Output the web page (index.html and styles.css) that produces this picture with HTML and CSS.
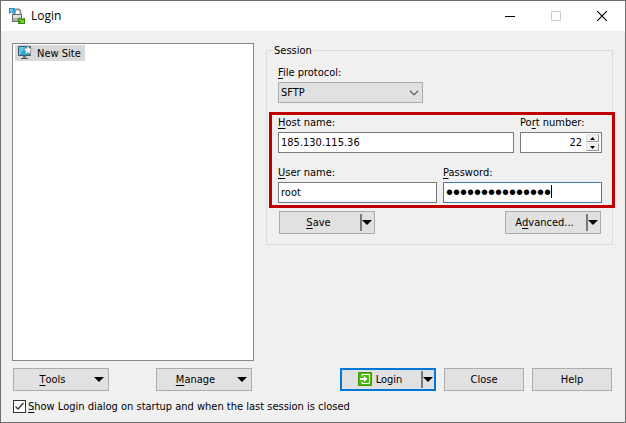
FILE: index.html
```html
<!DOCTYPE html>
<html lang="en">
<head>
<meta charset="utf-8">
<title>Login</title>
<link rel="stylesheet" href="styles.css">
</head>

<body>
<div class="window">

<header class="titlebar">
<svg class="app-icon" width="16" height="16" viewBox="0 0 16 16" aria-hidden="true">
<path d="M5.500 7V4a3 2.800 0 0 1 6 0v3" fill="none" stroke="#999" stroke-width="2"/>
<path d="M3.500 6.500h9v7h-9z" fill="#e2e2e2" stroke="#666"/>
<path d="M4 10h8v3H4z" fill="#b5b5b5"/>
<path d="M0 0h6v1L5 2l2 2-2.500 2.500L2.500 4 1 5.500H0z" fill="#1f8cc9"/>
<path d="M1 1h3v1L3.500 2.500 5.500 4.200l-1 1L2.500 3 1 4z" fill="#6fd0f5"/>
<path d="M16 16h-7v-1.200l1.200-1.200L8 11.500 10.500 9l2.300 2.200L14.500 10H16z" fill="#348a08"/>
<path d="M15 15h-4l1-1.200-2.300-2.300 1-1 2.300 2.300L15 11.500z" fill="#7ddc2c"/>
</svg>
<h1 class="title">Login</h1>
<button class="win-btn" type="button" aria-label="Minimize"><svg width="10" height="10" viewBox="0 0 10 10"><path d="M0 5.500h10" stroke="#000"/></svg></button>
<button class="win-btn" type="button" aria-label="Maximize" disabled><svg width="10" height="10" viewBox="0 0 10 10"><path d="M.5.5h9v9h-9z" fill="none" stroke="#ccc"/></svg></button>
<button class="win-btn" type="button" aria-label="Close window"><svg width="10" height="10" viewBox="0 0 10 10"><path d="M0 0l10 10M10 0L0 10" stroke="#000" stroke-width="1.2"/></svg></button>
</header>

<form class="content">
<div class="panes">

<ul class="sites">
<li><a class="site" href="#">
<svg width="16" height="16" viewBox="0 0 16 16" aria-hidden="true">
<path d="M1.500 1.500h12v9h-12z" fill="#22a9cf" stroke="#4b5a66"/>
<path d="M2 2h6L3 10H2z" fill="#58c9e6"/>
<path d="M6 11h3v2H6z" fill="#777"/>
<path d="M4 13h7v1H4z" fill="#555"/>
<path d="M11 .5l1.300 2.800 3.200.4-2.300 2.200.6 3.200L11 7.600 8.200 9.100l.6-3.200-2.300-2.200 3.200-.4z" fill="#f2f2f2" stroke="#999" stroke-width=".7"/>
</svg>
New Site</a></li>
</ul>

<fieldset class="session">
<legend>Session</legend>
<div class="field">
<label for="protocol"><u>F</u>ile protocol:</label>
<div class="select">
<select id="protocol"><option>SFTP</option></select>
<svg width="10" height="6" viewBox="0 0 10 6" aria-hidden="true"><path d="M1 .8l4 4 4-4" fill="none" stroke="#444" stroke-width="1.1"/></svg>
</div>
</div>

<div class="credentials">
<div class="row">
<div class="field grow">
<label for="host"><u>H</u>ost name:</label>
<input class="box" id="host" type="text" value="185.130.115.36">
</div>
<div class="field port">
<label for="port">Po<u>r</u>t number:</label>
<div class="box spin">
<input id="port" type="text" inputmode="numeric" value="22">
<div class="spin-buttons">
<button type="button" aria-label="Increase port"><svg width="5" height="3" viewBox="0 0 5 3"><path d="M0 3l2.500-3L5 3z"/></svg></button>
<button type="button" aria-label="Decrease port"><svg width="5" height="3" viewBox="0 0 5 3"><path d="M0 0l2.500 3L5 0z"/></svg></button>
</div>
</div>
</div>
</div>
<div class="row">
<div class="field grow">
<label for="user"><u>U</u>ser name:</label>
<input class="box" id="user" type="text" value="root">
</div>
<div class="field grow">
<label for="password"><u>P</u>assword:</label>
<div class="password">
<input class="box" id="password" type="password" value="passwordpasswor">
<span class="caret"></span>
</div>
</div>
</div>
</div>

<div class="actions">
<button class="btn split" type="button"><span class="text"><u>S</u>ave</span><span class="arrow"></span></button>
<button class="btn split" type="button"><span class="text">A<u>d</u>vanced...</span><span class="arrow"></span></button>
</div>
</fieldset>
</div>

<div class="footer">
<div class="footer-left">
<button class="btn menu" type="button"><span class="text"><u>T</u>ools</span><span class="arrow"></span></button>
<button class="btn menu" type="button"><span class="text"><u>M</u>anage</span><span class="arrow"></span></button>
</div>
<div class="footer-right">
<button class="btn split default" type="submit"><span class="text"><svg width="14" height="14" viewBox="0 0 14 14" aria-hidden="true">
<path d="M.5.5h13v13H.5z" fill="#4fb80f" stroke="#3a9608"/>
<path d="M4 4.500V2.500h7.500v9H4v-2" fill="none" stroke="#fff"/>
<path d="M2 6h4V4l3.500 3L6 10V8H2z" fill="#fff"/>
</svg>Login</span><span class="arrow"></span></button>
<button class="btn" type="button">Close</button>
<button class="btn" type="button">Help</button>
</div>
</div>

<label class="startup"><input type="checkbox" checked><span><u>S</u>how Login dialog on startup and when the last session is closed</span></label>
</form>

</div>
</body>
</html>
```
FILE: styles.css
```css
* {
  box-sizing: border-box;
}

body {
  margin: 0;
  background: #f0f0f0;
  color: #000;
  font: 11px/15px "DejaVu Sans Condensed", "Noto Sans", sans-serif;
}

button, input, select {
  margin: 0;
  color: inherit;
  font: inherit;
}

u {
  text-underline-offset: 2px;
}

.window {
  display: flex;
  flex-direction: column;
  min-height: 100vh;
  border: 1px solid #6e6e6e;
}

/* Title bar */
.titlebar {
  display: flex;
  align-items: center;
  height: 30px;
  padding-left: 8px;
  background: #fff;
}

.title {
  flex: 1;
  margin: 0 0 0 6px;
  font: 12px/16px "Open Sans", "Noto Sans", sans-serif;
}

.win-btn {
  display: flex;
  align-items: center;
  justify-content: center;
  width: 46px;
  height: 30px;
  padding: 0;
  border: 0;
  background: none;
}

.content {
  display: flex;
  flex: 1;
  flex-direction: column;
  padding: 12px 12px 8px 11px;
}

.panes {
  display: grid;
  flex: 1;
  grid-template-columns: 242px 1fr;
  align-items: start;
  gap: 12px;
}

/* Site list */
.sites {
  align-self: stretch;
  margin: 0;
  padding: 1px 2px;
  border: 1px solid #828790;
  background: #fff;
  list-style: none;
}

.site {
  display: inline-flex;
  align-items: center;
  gap: 4px;
  height: 16px;
  padding: 0 4px 0 2px;
  background: #d9d9d9;
  color: #000;
  text-decoration: none;
}

/* Session group */
.session {
  min-width: 0;
  margin: 0;
  padding: 7px 10px 10px 11px;
  border: 1px solid #dcdcdc;
}

.session legend {
  margin-left: -5px;
  padding: 0 1px;
}

.field label {
  display: block;
  margin-bottom: 2px;
}

.select {
  position: relative;
  width: 145px;
}

.select select {
  display: block;
  width: 100%;
  height: 21px;
  padding: 0 2px;
  border: 1px solid #adadad;
  border-radius: 0;
  background: #e1e1e1;
  appearance: none;
}

.select svg {
  position: absolute;
  top: 8px;
  right: 4px;
  pointer-events: none;
}

.credentials {
  display: grid;
  gap: 12px;
  margin: 9px -13px 3px -9px;
  padding: 0 10px 2px 6px;
  border: 3px solid #c00000;
}

.row {
  display: flex;
  gap: 6px;
}

.grow {
  flex: 1;
  min-width: 0;
}

.port {
  width: 82px;
}

.box {
  display: block;
  width: 100%;
  height: 21px;
  padding: 0 2px;
  border: 1px solid #7a7a7a;
  background: #fff;
  outline: 0;
}

.password {
  position: relative;
}

.password .box {
  border-color: #4a7ba6;
  font: 20px/15px "Liberation Sans", sans-serif;
}

.caret {
  position: absolute;
  top: 3px;
  left: 108px;
  width: 1px;
  height: 13px;
  background: #000;
}

.spin {
  display: flex;
  padding: 1px 2px;
}

.spin input {
  flex: 1;
  min-width: 0;
  padding: 0 4px 0 0;
  border: 0;
  outline: 0;
  text-align: right;
}

.spin-buttons {
  display: grid;
  gap: 1px;
  width: 13px;
}

.spin-buttons button {
  display: flex;
  align-items: center;
  justify-content: center;
  height: 8px;
  padding: 0;
  border: 1px solid;
  border-color: #e3e3e3 #999 #999 #e3e3e3;
  background: #f0f0f0;
}

.actions {
  display: flex;
  justify-content: space-between;
  padding: 0 1px;
}

/* Buttons */
.btn {
  display: flex;
  align-items: center;
  justify-content: center;
  width: 80px;
  height: 23px;
  padding: 0;
  border: 1px solid #adadad;
  background: #e1e1e1;
}

.btn .text {
  display: flex;
  flex: 1;
  justify-content: center;
}

.btn .text svg {
  margin-right: 4px;
}

.arrow::after {
  display: block;
  border: 5px solid transparent;
  border-top-color: #000;
  border-bottom: 0;
  content: "";
}

.split,
.menu {
  width: 96px;
}

.menu {
  padding-right: 4px;
}

.menu .text,
.split .text {
  padding-right: 3px;
}

.split {
  padding-right: 2px;
}

.split .arrow {
  display: flex;
  align-items: center;
  height: 17px;
  border-left: 2px solid #7a7a7a;
}

.default {
  padding-right: 1px;
  border: 2px solid #0078d7;
}

/* Bottom rows */
.footer {
  display: grid;
  grid-template-columns: 239px 1fr;
  padding: 7px 0 0 1px;
}

.footer-left {
  display: flex;
  justify-content: space-between;
}

.footer-right {
  display: flex;
  justify-content: flex-end;
  gap: 8px;
  padding-right: 1px;
}

.startup {
  display: flex;
  align-items: center;
  align-self: flex-start;
  gap: 2px;
  margin: 8px 0 0 1px;
}

.startup input {
  width: 13px;
  height: 13px;
  border: 1px solid #333;
  background: #fff url("data:image/svg+xml,%3Csvg xmlns='http://www.w3.org/2000/svg' viewBox='0 0 11 11'%3E%3Cpath d='M1.500 5.500l2.500 2.500 5.500-6' fill='none' stroke='%23333' stroke-width='1.3'/%3E%3C/svg%3E");
  appearance: none;
}
```
